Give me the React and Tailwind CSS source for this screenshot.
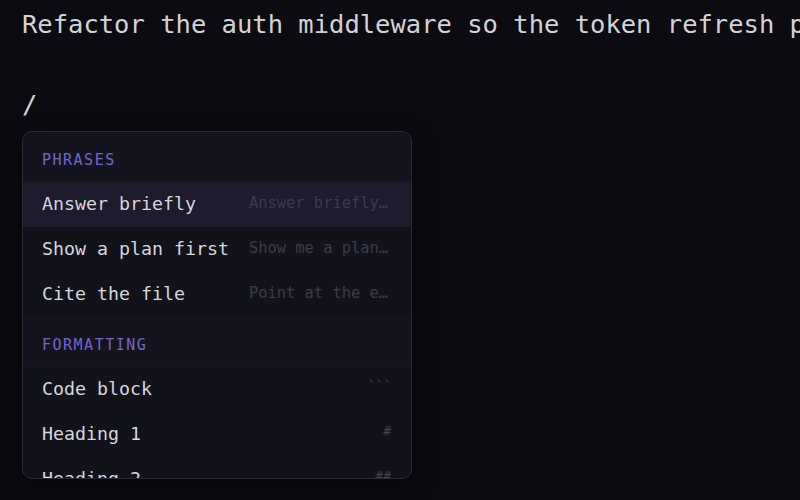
const mono = { fontFamily: '"DejaVu Sans Mono", "Liberation Mono", monospace' };

const sections = [
  {
    title: 'PHRASES',
    items: [
      { label: 'Answer briefly', desc: 'Answer briefly…', active: true },
      { label: 'Show a plan first', desc: 'Show me a plan…' },
      { label: 'Cite the file', desc: 'Point at the e…' },
    ],
  },
  {
    title: 'FORMATTING',
    items: [
      { label: 'Code block', hint: '```' },
      { label: 'Heading 1', hint: '#' },
      { label: 'Heading 2', hint: '##' },
    ],
  },
];

const MenuItem = ({ item }) => (
  <div
    className={`flex h-[45px] shrink-0 items-center pb-[2px] pl-[19px] pr-[20px] ${
      item.active ? 'bg-[#1d1b2c]' : ''
    }`}
  >
    <span className="w-[207px] shrink-0 text-[18.3px] text-[#d6d6dc]">{item.label}</span>
    {item.desc && (
      <span className="flex-1 truncate text-[15.4px] text-[#3b3a4a]">{item.desc}</span>
    )}
    {item.hint && (
      <span className="ml-auto -translate-y-[3px] text-[13px] text-[#44434f]">{item.hint}</span>
    )}
  </div>
);

export default function App() {
  return (
    <div className="min-h-screen overflow-hidden bg-[#0c0b11] px-[22px]" style={mono}>
      <div className="whitespace-nowrap pt-[9px] text-[25.5px] leading-[30.6px] text-[#d2d2d6]">
        Refactor the auth middleware so the token refresh path
      </div>
      <div className="mt-[49px] text-[25.5px] leading-[30.6px] text-[#d2d2d6]">/</div>
      <div className="mt-[12px] flex h-[348px] w-[390px] flex-col overflow-hidden rounded-[10px] border border-[#2a2a37] bg-[#12121b] shadow-[0_8px_24px_rgba(0,0,0,0.5)]">
        {sections.map((s) => (
          <div key={s.title} className="flex flex-col">
            <div className="flex h-[50px] shrink-0 items-center border-b border-[#191923] bg-[#14141e] pl-[19px] pt-[7px] text-[15px] tracking-[1.5px] text-[#7466c9]">
              {s.title}
            </div>
            {s.items.map((it) => (
              <MenuItem key={it.label} item={it} />
            ))}
          </div>
        ))}
      </div>
    </div>
  );
}
